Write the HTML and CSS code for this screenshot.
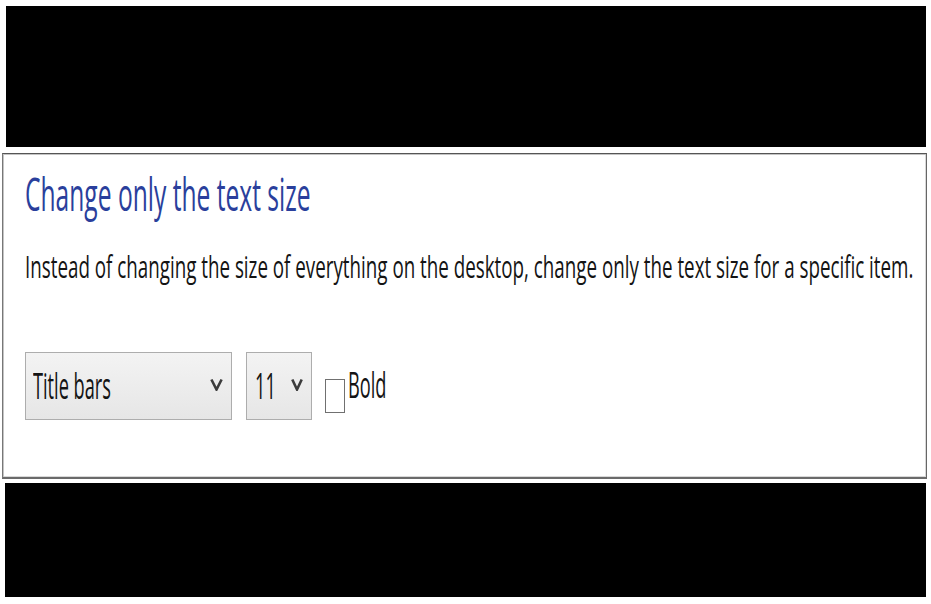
FILE: index.html
```html
<!DOCTYPE html>
<html lang="en">
<head>
<meta charset="utf-8">
<title>Change only the text size</title>
<link rel="stylesheet" href="styles.css">
</head>
<body>
<div class="page">
  <div class="band band-top"></div>
  <section class="panel">
    <h1 class="title"><span class="stretch">Change only the text size</span></h1>
    <p class="desc"><span class="stretch">Instead of changing the size of everything on the desktop, change only the text size for a specific item.</span></p>
    <div class="controls">
      <div class="combo combo-item">
        <span class="combo-text"><span class="stretch">Title bars</span></span>
        <svg class="chev" width="13" height="13" viewBox="0 0 13 13"><polyline points="1.4,1.5 6.5,11.5 11.6,1.5" fill="none" stroke="#3c3c3c" stroke-width="2.6"/></svg>
      </div>
      <div class="combo combo-size">
        <span class="combo-text"><span class="stretch">11</span></span>
        <svg class="chev" width="12" height="13" viewBox="0 0 12 13"><polyline points="1.3,1.5 6,11.5 10.7,1.5" fill="none" stroke="#3c3c3c" stroke-width="2.6"/></svg>
      </div>
      <label class="check">
        <span class="box"></span>
        <span class="check-text"><span class="stretch">Bold</span></span>
      </label>
    </div>
  </section>
  <div class="band band-bottom"></div>
</div>
</body>
</html>
```
FILE: styles.css
```css
html, body {
  margin: 0;
  padding: 0;
  background: #ffffff;
}
body {
  width: 931px;
  height: 604px;
  overflow: hidden;
  font-family: "Open Sans", "Noto Sans", sans-serif;
}
.page {
  display: flex;
  flex-direction: column;
  padding-top: 6px;
}
.band {
  background: #000;
}
.band-top {
  margin-left: 6px;
  width: 920px;
  height: 141px;
}
.band-bottom {
  margin-top: 4px;
  margin-left: 5px;
  width: 921px;
  height: 114px;
}
.panel {
  box-sizing: border-box;
  margin-top: 6px;
  margin-left: 2px;
  width: 925px;
  height: 326px;
  background: #fff;
  border-top: 1px solid #555;
  border-left: 1px solid #777;
  border-right: 1px solid #666;
  border-bottom: 2px solid #6a6a6a;
  box-shadow: inset 1px 1px 0 #c4c4c4, inset -1px -1px 0 #d8d8d8;
  padding: 21px 0 0 22px;
  display: flex;
  flex-direction: column;
  align-items: flex-start;
}
.stretch {
  display: inline-block;
  transform-origin: 0 50%;
}
.title {
  margin: 0;
  height: 40px;
  font-size: 24.6px;
  line-height: 40px;
  font-weight: 400;
  color: #2a3f9c;
  white-space: nowrap;
}
.title .stretch {
  transform: scaleY(1.82);
}
.desc {
  margin: 37px 0 0 0;
  height: 30px;
  font-size: 18.8px;
  line-height: 30px;
  color: #141414;
  white-space: nowrap;
}
.desc .stretch {
  transform: scaleY(1.64);
}
.controls {
  margin-top: 70px;
  display: flex;
  align-items: flex-start;
}
.combo {
  box-sizing: border-box;
  height: 68px;
  border: 1px solid #adadad;
  background: linear-gradient(#f3f3f3, #e6e6e6);
  display: flex;
  align-items: center;
  justify-content: space-between;
  padding: 0 8px 0 7px;
}
.combo-item {
  width: 207px;
}
.combo-size {
  width: 66px;
  margin-left: 14px;
  padding-left: 8px;
}
.combo-text {
  font-size: 18.2px;
  line-height: 30px;
  color: #141414;
  margin-top: -2px;
}
.combo-text .stretch,
.check-text .stretch {
  transform: scaleY(2);
}
.chev {
  display: block;
  margin-top: -4px;
}
.check {
  display: flex;
  align-items: flex-start;
  margin-left: 13px;
}
.box {
  box-sizing: border-box;
  width: 20px;
  height: 34px;
  margin-top: 27px;
  border: 1px solid #707070;
  background: #fff;
}
.check-text {
  margin-left: 3px;
  margin-top: 17px;
  font-size: 18.2px;
  line-height: 30px;
  color: #141414;
}
```
